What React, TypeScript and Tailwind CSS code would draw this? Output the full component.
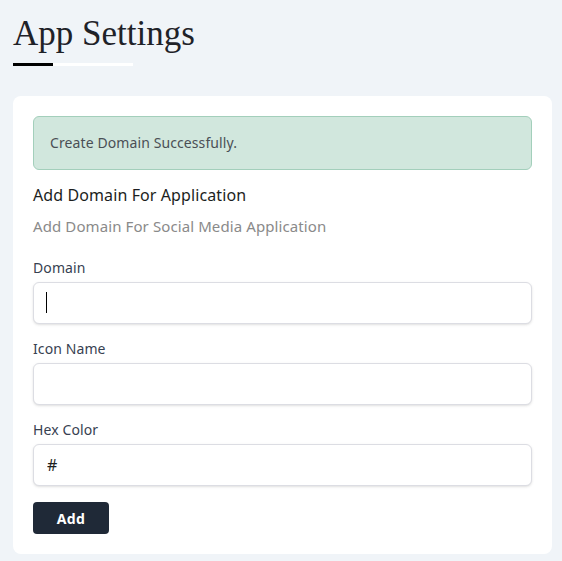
export default function App() {
  return (
    <div className="min-h-[561px] bg-[#f0f4f8] px-[13px] pt-[13px] pb-[6px] font-['Noto_Sans',sans-serif] tracking-[0.1px]">
      <h1 className="font-['Liberation_Serif',serif] text-[35px] leading-[42px] tracking-normal text-[#1f2228]">
        App Settings
      </h1>
      <div className="mt-[8px] flex h-[3px] w-[120px]">
        <div className="w-[40px] bg-black" />
        <div className="flex-1 bg-white" />
      </div>

      <div className="mt-[30px] w-[539px] rounded-lg bg-white p-5">
        <div className="rounded-md border border-[#a3cfbb] bg-[#d1e7dd] px-4 py-[15px] text-[14px] leading-[22px] text-[#4a4f55]">
          Create Domain Successfully.
        </div>

        <h2 className="mt-[13px] text-[16px] leading-[24px] text-[#1c1e21]">
          Add Domain For Application
        </h2>
        <p className="mt-[8px] text-[15px] leading-[22px] text-[#8a8a8a]">
          Add Domain For Social Media Application
        </p>

        <Field label="Domain" className="mt-[21px]" caret />
        <Field label="Icon Name" className="mt-[15px]" />
        <Field label="Hex Color" className="mt-[15px]" value="#" />

        <button className="mt-4 block h-8 w-[76px] rounded bg-[#1f2937] text-[14px] font-bold tracking-wide text-white">
          Add
        </button>
      </div>
    </div>
  );
}

function Field({
  label,
  className = "",
  value = "",
  caret,
}: {
  label: string;
  className?: string;
  value?: string;
  caret?: boolean;
}) {
  return (
    <div className={className}>
      <label className="block text-[14px] leading-[20px] text-[#374151]">{label}</label>
      <div className="relative mt-1">
        <input
          readOnly
          value={value}
          className="block h-[42px] w-full rounded-md border border-[#dcdde3] bg-white px-[13px] text-[16px] text-[#1c1e21] shadow-sm outline-none"
        />
        {caret && <div className="absolute left-[13px] top-[10px] h-[21px] w-px bg-black" />}
      </div>
    </div>
  );
}
